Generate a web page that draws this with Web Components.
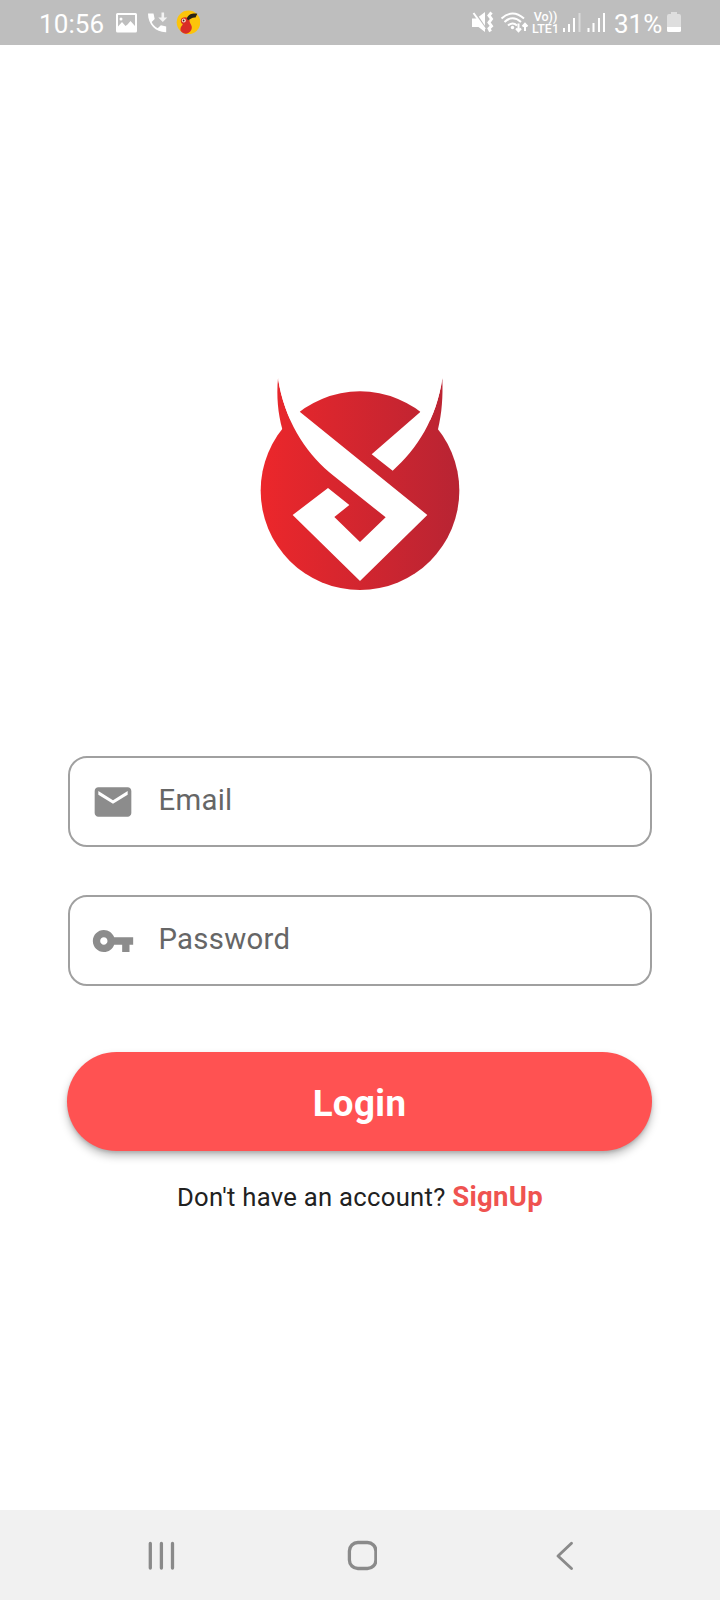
<!DOCTYPE html>
<html lang="en">
<head>
<meta charset="utf-8">
<title>Login</title>
<style>
html,body{margin:0;padding:0;background:#fff}
body{font-family:Roboto,"Liberation Sans",sans-serif}
</style>
</head>
<body>
<login-screen></login-screen>
<script>
const define = (name, html) => customElements.define(name, class extends HTMLElement {
  constructor() {
    super();
    const t = document.createElement('template');
    t.innerHTML = html;
    this.attachShadow({ mode: 'open' }).append(t.content.cloneNode(true));
  }
});

define('status-bar', `
<style>
:host{display:flex;justify-content:space-between;box-sizing:border-box;height:45px;background:#bebebe;color:#fff;padding:0 39px 0 39px;align-items:center;font-size:26px;line-height:45px;white-space:nowrap}
div{display:flex;align-items:center;height:45px}
svg{display:block;flex:none}
.big{padding-top:1px;height:45px;line-height:46px}
.volte{display:flex;flex-direction:column;font-size:12.500px;font-weight:500;line-height:12px;width:27px;height:24px;align-items:center}
</style>
<div><span class="big" style="width:77px;letter-spacing:.1px">10:56</span>
<svg width="84" height="45" viewBox="116 0 84 45" fill="#fff">
<path fill-rule="evenodd" d="M117.500 13h18a1.500 1.500 0 0 1 1.500 1.500v16.500a1.500 1.500 0 0 1-1.500 1.500h-18a1.500 1.500 0 0 1-1.500-1.500V14.500a1.500 1.500 0 0 1 1.500-1.500zm.5 2v11.500l4-4.500 3.500 4 2-1.500 3-3.500 4.500 5V15zM121 17.500a1.500 1.500 0 1 1 0 3 1.500 1.500 0 0 1 0-3z"/>
<path d="M148 13.500h5.500l1.200 5.500-3 3c1.200 2.700 3.100 4.700 6 6.200l3.200-3 5.300 1.400v5.600C156 32.500 148 24.500 148 13.500z"/>
<path d="M161.500 12.500h2.600v5h3.200l-4.500 4.500-4.500-4.500h3.200z" opacity=".8"/>
<circle cx="188.500" cy="22.300" r="11.800" fill="#fcc40b"/>
<path d="M180.800 20.500c.3-4 7.400-4.500 8.700-.3 0 3.300 2 4 2.300 6.800.2 3.500-2.300 6.300-6 6.700-3-.3-5.800-2.400-5.300-4.700.2-3 2.200-3.500 2.200-5-1.300-.5-2-1.500-1.900-3.500z" fill="#d92d26"/>
<path d="M186.800 18.500c2-4.500 5-5.200 10.500-4.800l-1.800 3.800c-3.500-.3-5 1.800-7.500 2.800z" fill="#292316"/>
<circle cx="183.800" cy="20.500" r="2" fill="#ffe3cf"/><circle cx="183.600" cy="20.500" r=".9" fill="#40201b"/>
</svg></div>
<div>
<svg width="60" height="45" viewBox="472 0 60 45" fill="#fff">
<path d="M472 18.500h4.500l8.500-6.500v20l-6.500-5H472z"/><path d="M475 12.500l12 18" stroke="#bebebe" stroke-width="1.800"/>
<path d="M473.500 13l11.500 16" stroke="#fff" stroke-width="2"/>
<path d="M491.500 12.500l-2.500 3 2.500 3.500-2.500 3.500 2.500 3.500-2.500 2.500 1.500 3" fill="none" stroke="#fff" stroke-width="3"/>
<g fill="none" stroke="#fff" stroke-width="2"><path d="M501.500 18.500Q512.500 8.500 524 18.500M504.500 22q8-7.500 16.500 0M508 25.500q4.700-4 9 0"/></g><circle cx="512.500" cy="27.500" r="1.700"/>
<path d="M518.500 23.500v7.500M516 28.500l2.500 2.700 2.500-2.700M525 31v-7M522.500 26.500l2.500-2.700 2.500 2.700" fill="none" stroke="#fff" stroke-width="2"/>
</svg>
<span class="volte"><span>Vo))</span><span>LTE1</span></span>
<svg width="55" height="45" viewBox="559 0 55 45" stroke="#fff" stroke-width="2"><path d="M564 32v-4M569 32v-8M574 32V18"/><path d="M579.500 32V13" opacity=".45"/><path d="M588.500 32v-4M593.500 32v-9M599 32V18M604 32V13"/></svg>
<span class="big" style="width:53px">31%</span>
<svg width="14" height="45" viewBox="667 0 14 45"><path d="M671 12h6v2h2a2 2 0 0 1 2 2v11h-14V16a2 2 0 0 1 2-2h2z" fill="#dedede"/><path d="M667 27h14v3.500a1.500 1.500 0 0 1-1.500 1.500h-11a1.500 1.500 0 0 1-1.500-1.500z" fill="#fff"/></svg>
</div>`);

define('brand-logo', `
<style>:host{display:block;width:220px;height:230px}svg{display:block}</style>
<svg width="220" height="230" viewBox="0 0 660 690">
<defs><linearGradient id="g" gradientUnits="userSpaceOnUse" x1="32" y1="0" x2="628" y2="0"><stop offset="0" stop-color="#ec272b"/><stop offset="1" stop-color="#b82433"/></linearGradient></defs>
<g fill="url(#g)"><circle cx="330" cy="362" r="298"/>
<path d="M84 25C79 80 84 130 97 178L160 260 237 303C165 240 103 150 84 25z"/>
<path d="M577 25C579 80 576 130 564 178L500 260 428 302C500 240 560 145 577 25z"/></g>
<path fill="#fff" d="M84 25C103 150 165 245 237 306Q250 317 262 326L407 442 330 516 253 441 298 405 234 354 128 435 330 633 532 435 151 127z"/>
<path fill="#fff" d="M577 25C560 145 500 240 428 302L365 253 510 127z"/>
</svg>`);

define('text-field', `
<style>
:host{display:flex;box-sizing:border-box;width:584px;height:91px;border:2px solid #a0a0a0;border-radius:19px;align-items:center;padding-left:20.500px}
::slotted(svg){display:block;width:44px;height:44px;fill:#8c8c8c;flex:none}
span{margin-left:24px;font-size:29.330px;line-height:34px;color:#666;letter-spacing:.28px;padding-bottom:3px}
</style><slot name="icon"></slot><span><slot></slot></span>`);

define('login-button', `
<style>
:host{display:block;width:585px}
button{display:block;width:100%;height:99px;border:0;border-radius:50px;padding:5px 0 0;background:#ff5252;color:#fff;font:700 36.670px/44px Roboto,sans-serif;letter-spacing:.4px;box-shadow:0 5px 9px rgba(0,0,0,.25),0 2px 3px rgba(0,0,0,.12)}
</style><button><slot></slot></button>`);

define('signup-line', `
<style>
:host{display:flex;justify-content:center;align-items:baseline;font-size:25.670px;line-height:34px;color:#212121;white-space:pre;letter-spacing:.28px}
b{font-size:27.500px;font-weight:700;color:#ef5350;letter-spacing:.3px}
</style><span><slot></slot> </span><b><slot name="action"></slot></b>`);

define('nav-bar', `
<style>:host{display:grid;grid-template-columns:repeat(3,201px);justify-content:center;justify-items:center;align-items:center;height:90px;background:#f1f1f1}
svg{display:block;fill:none;stroke:#8a8a8a;stroke-width:3.300;stroke-linecap:round;stroke-linejoin:round}</style>
<svg width="34" height="34" viewBox="0 0 34 34"><path d="M8.300 5.500v24.500M19.400 5.500v24.500M30.500 5.500v24.500"/></svg>
<svg width="34" height="34" viewBox="0 0 34 34"><rect x="6.400" y="4.500" width="26.500" height="26" rx="8.500"/></svg>
<svg width="34" height="34" viewBox="0 0 34 34"><path d="M27.500 5.200L14 18l13.500 12.500" style="stroke-width:2.900"/></svg>`);

define('login-screen', `
<style>
:host{display:flex;flex-direction:column;width:720px;height:1600px;background:#fff}
main{flex:1;display:flex;flex-direction:column;align-items:center}
brand-logo{margin-top:325px}
.f1{margin-top:156px}.f2{margin-top:48px}
login-button{margin-top:66px;margin-right:1px}
signup-line{margin-top:29px}
</style>
<status-bar></status-bar>
<main>
<brand-logo></brand-logo>
<text-field class="f1"><svg slot="icon" viewBox="0 0 24 24"><path d="M20 4H4c-1.100 0-1.990.9-1.990 2L2 18c0 1.100.9 2 2 2h16c1.100 0 2-.9 2-2V6c0-1.100-.9-2-2-2zm0 4l-8 5-8-5V6l8 5 8-5v2z"/></svg>Email</text-field>
<text-field class="f2"><svg slot="icon" viewBox="0 0 24 24"><path d="M12.650 10C11.830 7.670 9.610 6 7 6c-3.310 0-6 2.690-6 6s2.690 6 6 6c2.610 0 4.830-1.670 5.650-4H17v4h4v-4h2v-4H12.650zM7 14c-1.100 0-2-.9-2-2s.9-2 2-2 2 .9 2 2-.9 2-2 2z"/></svg>Password</text-field>
<login-button>Login</login-button>
<signup-line>Don't have an account?<span slot="action">SignUp</span></signup-line>
</main>
<nav-bar></nav-bar>`);
</script>
</body>
</html>
